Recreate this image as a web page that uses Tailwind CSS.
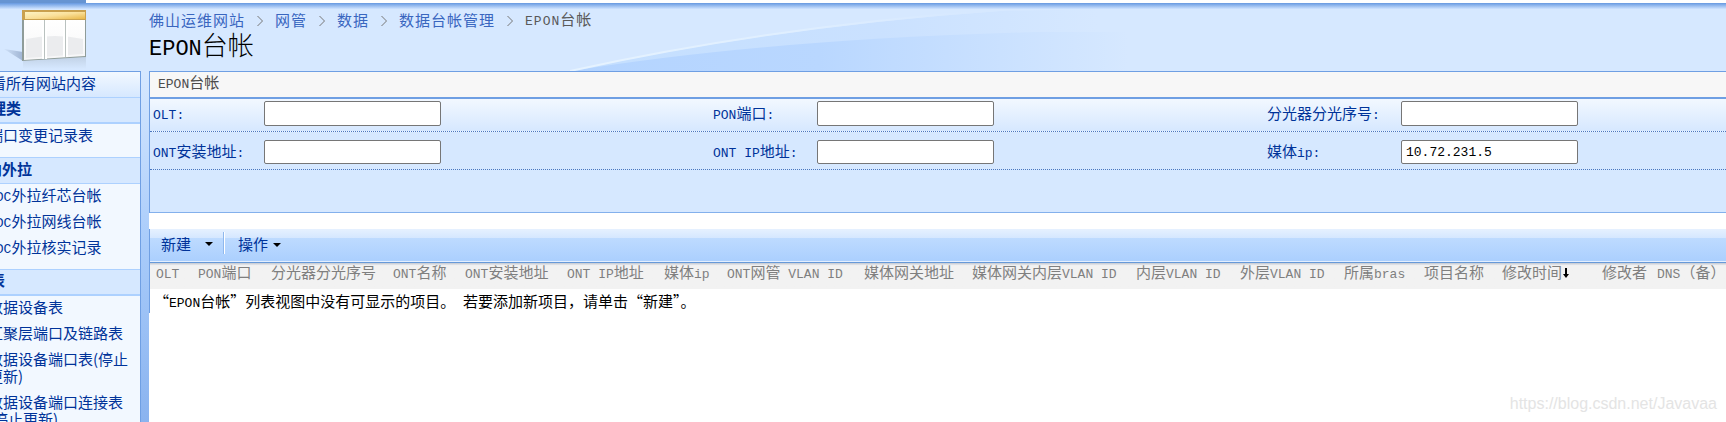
<!DOCTYPE html>
<html lang="zh-CN">

<head>
    <meta charset="utf-8" />
    <meta content="width=device-width, initial-scale=1.0" name="viewport" />
    <title>EPON台帐</title>
    <script src="https://cdn.jsdelivr.net/npm/@tailwindcss/browser@4"></script>
</head>

<body class="relative flex flex-col min-h-screen overflow-x-hidden bg-white font-['Noto_Sans_CJK_SC',sans-serif] text-[15px] leading-[17px] text-[#003399]">
    <!-- 顶部 -->
    <div class="h-[3px] bg-white"><div class="h-[3px] w-[86px] bg-[#6694d2]"></div></div>
    <header class="relative flex h-[68px] bg-[#d6e8ff]">
        <svg class="absolute left-[570px] top-0" width="620" height="68" viewBox="0 0 620 68" aria-hidden="true">
            <defs>
                <linearGradient id="wave" x1="0" x2="1" y1="0" y2="0">
                    <stop offset="0" stop-color="#b4d4ff" />
                    <stop offset="0.4" stop-color="#b9d7ff" />
                    <stop offset="0.9" stop-color="#d6e8ff" />
                </linearGradient>
                <linearGradient id="haze" x1="0" x2="1" y1="0" y2="0">
                    <stop offset="0" stop-color="#c4dfff" />
                    <stop offset="0.5" stop-color="#cae1ff" />
                    <stop offset="0.85" stop-color="#d6e8ff" />
                </linearGradient>
                <linearGradient id="shine" gradientUnits="userSpaceOnUse" x1="0" x2="400" y1="0" y2="0">
                    <stop offset="0" stop-color="#e6f3ff" />
                    <stop offset="0.5" stop-color="#e0efff" />
                    <stop offset="1" stop-color="#d6e8ff" />
                </linearGradient>
            </defs>
            <path d="M2 68 Q204 24 430 8 L620 4 V68 Z" fill="url(#haze)" />
            <path d="M2 68 Q200 36 470 29 H620 V68 Z" fill="url(#wave)" />
            <path d="M0 68 Q204 23 430 7" fill="none" stroke="url(#shine)" stroke-width="2" />
        </svg>
        <div class="absolute inset-x-0 top-0 h-[6px] bg-linear-to-b from-[#6699e0] to-[#d0e4ff]"></div>
        <div class="relative w-[149px] shrink-0">
            <svg width="100" height="68" viewBox="0 3 100 68" role="img" aria-label="列表">
                <defs>
                    <linearGradient id="gold" x1="0" x2="1" y1="0" y2="1">
                        <stop offset="0" stop-color="#fdf3c4" />
                        <stop offset="0.5" stop-color="#fae09a" />
                        <stop offset="1" stop-color="#e9b84a" />
                    </linearGradient>
                    <linearGradient id="cell" x1="0" x2="0" y1="0" y2="1">
                        <stop offset="0" stop-color="#ffffff" />
                        <stop offset="1" stop-color="#f6f6f7" />
                    </linearGradient>
                    <linearGradient id="mirror" x1="0" x2="0" y1="0" y2="1">
                        <stop offset="0" stop-color="#b9c9dc" />
                        <stop offset="1" stop-color="#d6e8ff" />
                    </linearGradient>
                    <linearGradient id="shade" x1="0" x2="1" y1="0" y2="0">
                        <stop offset="0" stop-color="#cfe1f8" />
                        <stop offset="1" stop-color="#9fb4d3" />
                    </linearGradient>
                </defs>
                <path d="M4 49 L23 52 V61 Z" fill="url(#shade)" />
                <path d="M23 61 L86 57 V69 H23 Z" fill="url(#mirror)" opacity="0.7" />
                <path d="M22 10 H86 V57 L22 61 Z" fill="#8f9c99" />
                <path d="M22 10 H86 V20 H22 Z" fill="#c9a04e" />
                <path d="M25 12 H85 V19 H25 Z" fill="url(#gold)" />
                <path d="M24 20 H85 V56 L24 60 Z" fill="url(#cell)" />
                <path d="M26 39 Q55 33 83 39 V54 L26 58 Z" fill="#ebecee" />
                <path d="M46 20 V59 M67 20 V57 M43 20 V59 M64 20 V57" stroke="#ffffff" stroke-width="2" />
                <path d="M44.500 20 V59 M65.500 20 V57" stroke="#b9c1bf" stroke-width="1" />
            </svg>
        </div>
        <div class="relative pt-[7px]">
            <nav class="flex items-center gap-[12px] tracking-[1px] text-[#3966bf]" aria-label="路径">
                <a href="#">佛山运维网站</a>
                <svg class="mt-[3px]" width="6" height="12" viewBox="0 0 6 12" fill="none" stroke="#777777"><path d="M0.500 1 L5.500 6 L0.500 11" /></svg>
                <a href="#">网管</a>
                <svg class="mt-[3px]" width="6" height="12" viewBox="0 0 6 12" fill="none" stroke="#777777"><path d="M0.500 1 L5.500 6 L0.500 11" /></svg>
                <a href="#">数据</a>
                <svg class="mt-[3px]" width="6" height="12" viewBox="0 0 6 12" fill="none" stroke="#777777"><path d="M0.500 1 L5.500 6 L0.500 11" /></svg>
                <a href="#">数据台帐管理</a>
                <svg class="mt-[3px]" width="6" height="12" viewBox="0 0 6 12" fill="none" stroke="#777777"><path d="M0.500 1 L5.500 6 L0.500 11" /></svg>
                <span class="text-[#595959]"><span class="font-['Liberation_Mono',monospace] text-[13px] leading-none">EPON</span>台帐</span>
            </nav>
            <h1 class="text-[26px] leading-[32px] font-light text-black"><span class="font-['Liberation_Mono',monospace] text-[22px] leading-none">EPON</span>台帐</h1>
        </div>
    </header>

    <div class="flex grow">
        <!-- 快速启动 -->
        <aside class="w-[141px] shrink-0 overflow-hidden whitespace-nowrap border-t border-r border-[#6f9fe3] bg-[#f2f8ff]">
            <a href="#" class="flex h-[25px] items-center bg-linear-to-b from-[#f2f8ff] to-[#d6e8ff] pb-[5px]"><span class="-ml-[9px]">看所有网站内容</span></a>
            <h2 class="flex h-[27px] items-center border-t border-b-2 border-[#add1ff] bg-[#d6e8ff] pb-[5px] font-bold"><span class="-ml-[9px]">理类</span></h2>
            <ul class="-ml-[12px] h-[33px] pt-[2px]">
                <li><a href="#">端口变更记录表</a></li>
            </ul>
            <h2 class="flex h-[27px] items-center border-t border-b border-[#add1ff] bg-[#d6e8ff] pb-[5px] font-bold"><span class="-ml-[13px]">内外拉</span></h2>
            <ul class="-ml-[12px] flex h-[85px] flex-col gap-[8px] pt-[2px]">
                <li><a href="#"><span class="font-['Liberation_Mono',monospace] text-[13px] leading-none">IDC</span>外拉纤芯台帐</a></li>
                <li><a href="#"><span class="font-['Liberation_Mono',monospace] text-[13px] leading-none">IDC</span>外拉网线台帐</a></li>
                <li><a href="#"><span class="font-['Liberation_Mono',monospace] text-[13px] leading-none">IDC</span>外拉核实记录</a></li>
            </ul>
            <h2 class="flex h-[27px] items-center border-t border-b-2 border-[#add1ff] bg-[#d6e8ff] pb-[5px] font-bold"><span class="-ml-[10px]">表</span></h2>
            <ul class="-ml-[12px] flex h-[126px] flex-col gap-[9px] pt-[2px]">
                <li><a href="#">数据设备表</a></li>
                <li><a href="#">汇聚层端口及链路表</a></li>
                <li><a href="#">数据设备端口表(停止<br>更新)</a></li>
                <li><a href="#">数据设备端口连接表<br>(停止更新)</a></li>
            </ul>
        </aside>
        <div class="w-[8px] shrink-0 bg-linear-to-b from-[#d6e8ff] via-[#a8cbfa] to-[#8ab3ef]"></div>

        <main class="min-w-0 grow">
            <div class="border-l border-[#6f9fe3]">
                <div class="h-[28px] border-t border-b-2 border-[#6f9fe3] bg-[#f7f7f7] pt-[1px] pl-[8px] text-[#4c4c4c]"><span class="font-['Liberation_Mono',monospace] text-[13px] leading-none">EPON</span>台帐</div>
                <form class="h-[114px] border-b border-[#83b0ec] bg-[#d6e8ff]">
                    <div class="grid h-[33px] grid-cols-[111px_449px_104px_450px_134px_1fr] items-center border-b border-dotted border-[#4a77c0] bg-linear-to-b from-[#f2f8ff] to-[#d6e8ff] pb-[3px] pl-[3px]">
                        <label for="olt" class="pb-[2px]"><span class="font-['Liberation_Mono',monospace] text-[13px] leading-none">OLT:</span></label>
                        <input id="olt" type="text" class="h-[25px] w-[177px] rounded-[2px] border border-[#767676] bg-white px-[4px] text-black">
                        <label for="pon" class="pb-[2px]"><span class="font-['Liberation_Mono',monospace] text-[13px] leading-none">PON</span>端口<span class="font-['Liberation_Mono',monospace] text-[13px] leading-none">:</span></label>
                        <input id="pon" type="text" class="h-[25px] w-[177px] rounded-[2px] border border-[#767676] bg-white px-[4px] text-black">
                        <label for="splitter" class="pb-[2px]">分光器分光序号<span class="font-['Liberation_Mono',monospace] text-[13px] leading-none">:</span></label>
                        <input id="splitter" type="text" class="h-[25px] w-[177px] rounded-[2px] border border-[#767676] bg-white px-[4px] text-black">
                    </div>
                    <div class="grid h-[38px] grid-cols-[111px_449px_104px_450px_134px_1fr] items-center border-b border-dotted border-[#4a77c0] pt-[3px] pl-[3px]">
                        <label for="ont-address" class="pb-[2px]"><span class="font-['Liberation_Mono',monospace] text-[13px] leading-none">ONT</span>安装地址<span class="font-['Liberation_Mono',monospace] text-[13px] leading-none">:</span></label>
                        <input id="ont-address" type="text" class="h-[24px] w-[177px] rounded-[2px] border border-[#767676] bg-white px-[4px] text-black">
                        <label for="ont-ip" class="pb-[2px]"><span class="font-['Liberation_Mono',monospace] text-[13px] leading-none">ONT IP</span>地址<span class="font-['Liberation_Mono',monospace] text-[13px] leading-none">:</span></label>
                        <input id="ont-ip" type="text" class="h-[24px] w-[177px] rounded-[2px] border border-[#767676] bg-white px-[4px] text-black">
                        <label for="media-ip" class="pb-[2px]">媒体<span class="font-['Liberation_Mono',monospace] text-[13px] leading-none">ip:</span></label>
                        <input id="media-ip" type="text" value="10.72.231.5" class="h-[24px] w-[177px] rounded-[2px] border border-[#767676] bg-white px-[4px] font-['Liberation_Mono',monospace] text-[13px] text-black">
                    </div>
                </form>
            </div>

            <!-- 工具栏 -->
            <div class="mt-[16px] border-l border-[#6f9fe3]">
                <div class="border-b border-[#6699d8] bg-linear-to-b from-[#e6f1ff] to-[#d3e6ff] to-30%">
                    <div class="flex h-[33px] items-center border-b border-[#e3efff] bg-linear-to-b from-transparent from-27% via-[#bedbff] via-27% to-[#abcffe] pb-[4px] pl-[11px]">
                        <button type="button" class="flex items-center gap-[14px]">新建<svg class="mt-[2px]" width="8" height="4" viewBox="0 0 8 4" aria-hidden="true"><path d="M0 0 H8 L4 4 Z" fill="#000000" /></svg></button>
                        <div class="ml-[10px] h-[22px] w-[2px] border-l border-[#8fb8ed] bg-white"></div>
                        <button type="button" class="ml-[13px] flex items-center gap-[5px]">操作<svg class="mt-[3px]" width="8" height="4" viewBox="0 0 8 4" aria-hidden="true"><path d="M0 0 H8 L4 4 Z" fill="#000000" /></svg></button>
                    </div>
                </div>
                <table class="w-full table-fixed text-left whitespace-nowrap">
                    <thead>
                        <tr class="h-[26px] bg-linear-to-b from-[#c3c8d2] to-[#f2f2f2] to-10% align-top text-[#7f7f7f]">
                            <th class="w-[42px] pl-[6px] font-normal"><span class="font-['Liberation_Mono',monospace] text-[13px] leading-none">OLT</span></th>
                            <th class="w-[73px] pl-[6px] font-normal"><span class="font-['Liberation_Mono',monospace] text-[13px] leading-none">PON</span>端口</th>
                            <th class="w-[122px] pl-[6px] font-normal">分光器分光序号</th>
                            <th class="w-[72px] pl-[6px] font-normal"><span class="font-['Liberation_Mono',monospace] text-[13px] leading-none">ONT</span>名称</th>
                            <th class="w-[102px] pl-[6px] font-normal"><span class="font-['Liberation_Mono',monospace] text-[13px] leading-none">ONT</span>安装地址</th>
                            <th class="w-[97px] pl-[6px] font-normal"><span class="font-['Liberation_Mono',monospace] text-[13px] leading-none">ONT IP</span>地址</th>
                            <th class="w-[63px] pl-[6px] font-normal">媒体<span class="font-['Liberation_Mono',monospace] text-[13px] leading-none">ip</span></th>
                            <th class="w-[137px] pl-[6px] font-normal"><span class="font-['Liberation_Mono',monospace] text-[13px] leading-none">ONT</span>网管<span class="font-['Liberation_Mono',monospace] text-[13px] leading-none"> VLAN ID</span></th>
                            <th class="w-[108px] pl-[6px] font-normal">媒体网关地址</th>
                            <th class="w-[164px] pl-[6px] font-normal">媒体网关内层<span class="font-['Liberation_Mono',monospace] text-[13px] leading-none">VLAN ID</span></th>
                            <th class="w-[104px] pl-[6px] font-normal">内层<span class="font-['Liberation_Mono',monospace] text-[13px] leading-none">VLAN ID</span></th>
                            <th class="w-[104px] pl-[6px] font-normal">外层<span class="font-['Liberation_Mono',monospace] text-[13px] leading-none">VLAN ID</span></th>
                            <th class="w-[80px] pl-[6px] font-normal">所属<span class="font-['Liberation_Mono',monospace] text-[13px] leading-none">bras</span></th>
                            <th class="w-[78px] pl-[6px] font-normal">项目名称</th>
                            <th class="w-[100px] pl-[6px] font-normal"><span class="flex items-center">修改时间<svg class="mt-[3px]" width="7" height="11" viewBox="0 0 7 11" aria-label="降序"><path d="M3 0 H5 V6 H7 L4 10 L1 6 H3 Z" fill="#000000" /></svg></span></th>
                            <th class="w-[55px] pl-[6px] font-normal">修改者</th>
                            <th class="pl-[6px] font-normal"><span class="font-['Liberation_Mono',monospace] text-[13px] leading-none">DNS</span>（备）</th>
                        </tr>
                    </thead>
                    <tbody>
                        <tr><td colspan="17" class="py-[3px] pl-[4px] text-black">“<span class="font-['Liberation_Mono',monospace] text-[13px] leading-none">EPON</span>台帐”列表视图中没有可显示的项目。<span class="font-['Liberation_Mono',monospace] text-[13px] leading-none"> </span>若要添加新项目，请单击“新建”。</td></tr>
                    </tbody>
                </table>
            </div>
        </main>
    </div>
    <p class="absolute right-[9px] bottom-[10px] font-['Liberation_Sans',sans-serif] text-[16px] text-[#e4e4e4]">https://blog.csdn.net/Javavaa</p>
</body>

</html>
